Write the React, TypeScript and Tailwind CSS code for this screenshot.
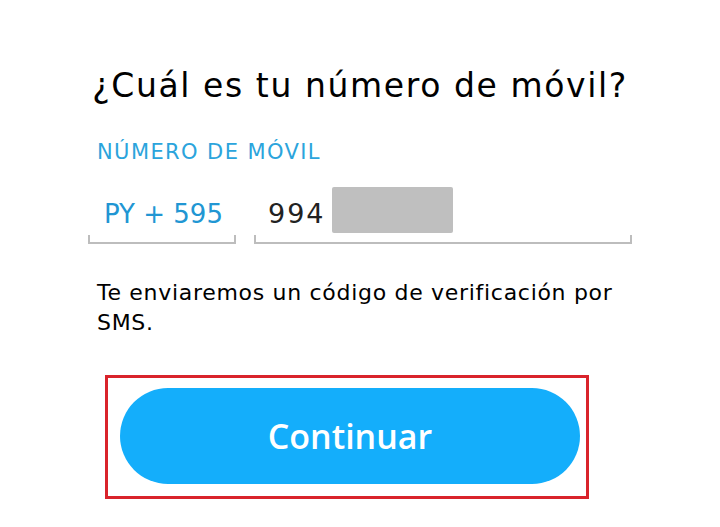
export default function App() {
  return (
    <div
      className="w-[720px] h-[527px] bg-white overflow-hidden"
      style={{ fontFamily: '"DejaVu Sans", "Open Sans", sans-serif' }}
    >
      <div className="px-[88px] pt-[64px]">
        <h1 className="text-center text-[33px] leading-[44px] tracking-[1.6px] text-black font-normal whitespace-nowrap">
          ¿Cuál es tu número de móvil?
        </h1>

        <div className="mt-[31px] pl-[9px] text-[21px] leading-[26px] tracking-[1.4px] text-[#2ba4dc] whitespace-nowrap">
          NÚMERO DE MÓVIL
        </div>

        <div className="mt-[26px] flex gap-[18px]">
          <div className="w-[148px]">
            <div className="h-[46px] flex items-center pl-[16px] text-[26px] text-[#2196d3] whitespace-nowrap">
              PY + 595
            </div>
            <div className="h-[9px] border-x-2 border-b-2 border-[#bdbdbd] -mt-[2px]" />
          </div>
          <div className="flex-1">
            <div className="h-[46px] flex items-center pl-[14px] gap-[6px] text-[27px] tracking-[2px] text-[#222]">
              <span>994</span>
              <span className="self-start -mt-[4px] w-[121px] h-[46px] rounded-[2px] bg-[#bfbfbf]" />
            </div>
            <div className="h-[9px] border-x-2 border-b-2 border-[#bdbdbd] -mt-[2px]" />
          </div>
        </div>

        <p className="mt-[34px] pl-[9px] text-[22px] leading-[30px] tracking-[0.7px] text-black whitespace-nowrap">
          Te enviaremos un código de verificación por
          <br />
          SMS.
        </p>

        <div className="mt-[37px] ml-[17px] w-[484px] h-[124px] border-[3px] border-[#d9232b] pl-[12px] pr-[6px] pt-[10px]">
          <button
            className="w-full h-[96px] rounded-full bg-[#14aefb] text-white text-[34px] font-semibold"
            style={{ fontFamily: '"Open Sans", sans-serif' }}
          >
            Continuar
          </button>
        </div>
      </div>
    </div>
  );
}
